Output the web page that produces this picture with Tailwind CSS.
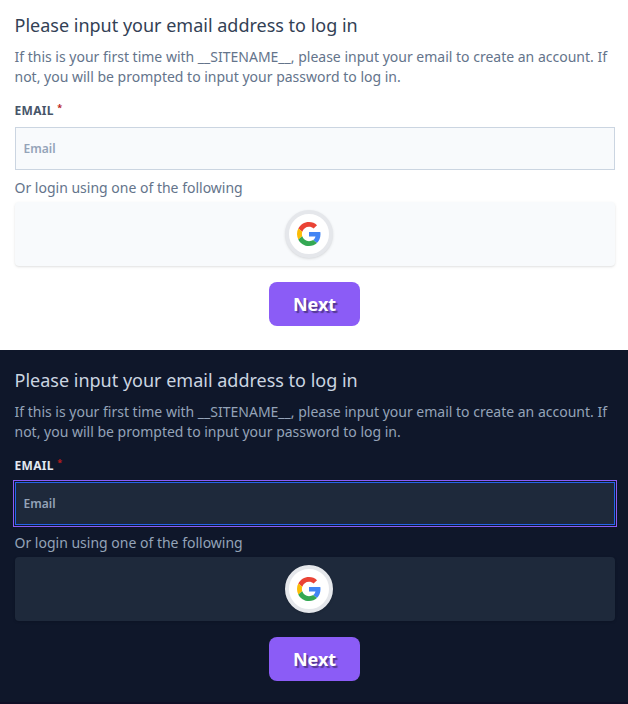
<!DOCTYPE html>
<html lang="en">
<head>
<meta charset="utf-8">
<title>Log in</title>
<script src="https://cdn.jsdelivr.net/npm/@tailwindcss/browser@4"></script>
</head>
<body class="bg-white font-['Noto_Sans',sans-serif] text-sm">
<svg class="hidden">
  <symbol id="google" viewBox="0 0 48 48">
    <path fill="#EA4335" d="M24 9.5c3.54 0 6.71 1.22 9.21 3.6l6.85-6.85C35.9 2.38 30.47 0 24 0 14.62 0 6.51 5.38 2.56 13.22l7.98 6.19C12.43 13.72 17.74 9.5 24 9.5z"/>
    <path fill="#4285F4" d="M46.98 24.55c0-1.57-.15-3.09-.38-4.55H24v9.02h12.94c-.58 2.96-2.26 5.48-4.78 7.18l7.73 6c4.51-4.18 7.09-10.36 7.09-17.65z"/>
    <path fill="#FBBC05" d="M10.53 28.59c-.48-1.45-.76-2.99-.76-4.59s.27-3.14.76-4.59l-7.98-6.19C.92 16.46 0 20.12 0 24c0 3.88.92 7.54 2.56 10.78l7.97-6.19z"/>
    <path fill="#34A853" d="M24 48c6.48 0 11.93-2.13 15.89-5.81l-7.73-6c-2.15 1.45-4.92 2.3-8.16 2.3-6.26 0-11.57-4.22-13.47-9.91l-7.98 6.19C6.51 42.62 14.62 48 24 48z"/>
  </symbol>
</svg>
<section class="h-[350px] pt-[11px] pl-[14.5px] pr-[13.5px] text-[#64748b]">
  <h1 class="text-lg leading-7 text-[#334155]">Please input your email address to log in</h1>
  <p class="mt-2 leading-5">If this is your first time with __SITENAME__, please input your email to create an account. If not, you will be prompted to input your password to log in.</p>
  <label class="mt-4 block h-4 text-xs leading-4 font-bold tracking-wide text-[#475569]">EMAIL <span class="relative -top-1 text-[9px] leading-none text-[#b91c1c]">*</span></label>
  <input class="mt-2 block h-[43px] w-full border border-[#cbd5e1] bg-[#f8fafc] px-2 text-xs font-semibold outline-none placeholder:text-[#94a3b8]" placeholder="Email">
  <p class="mt-2 leading-5">Or login using one of the following</p>
  <div class="mt-1 flex h-16 items-center justify-center rounded bg-[#f8fafc] pr-3 shadow-sm">
    <button class="flex size-12 items-center justify-center rounded-full border-4 border-[#e5e7eb] bg-white shadow-sm"><svg class="size-6"><use href="#google"/></svg></button>
  </div>
  <button class="mx-auto mt-4 block h-11 w-[91px] rounded-lg bg-[#8b5cf6] text-lg font-bold text-white [text-shadow:2px_2px_1px_rgba(0,0,0,0.4)]">Next</button>
</section>
<section class="h-[352px] bg-[#0f172a] pt-4 pl-[14.5px] pr-[13.5px] text-[#94a3b8]">
  <h1 class="text-lg leading-7 text-[#cbd5e1]">Please input your email address to log in</h1>
  <p class="mt-2 leading-5">If this is your first time with __SITENAME__, please input your email to create an account. If not, you will be prompted to input your password to log in.</p>
  <label class="mt-4 block h-4 text-xs leading-4 font-bold tracking-wide text-[#e2e8f0]">EMAIL <span class="relative -top-1 text-[9px] leading-none text-[#b91c1c]">*</span></label>
  <input class="mt-2 block h-[43px] w-full border border-[#2563eb] bg-[#1e293b] px-2 text-xs font-semibold outline outline-offset-1 outline-[#8b5cf6] placeholder:text-[#94a3b8]" placeholder="Email">
  <p class="mt-2 leading-5">Or login using one of the following</p>
  <div class="mt-1 flex h-16 items-center justify-center rounded bg-[#1e293b] pr-3 shadow-sm">
    <button class="flex size-12 items-center justify-center rounded-full border-4 border-[#e5e7eb] bg-white shadow-sm"><svg class="size-6"><use href="#google"/></svg></button>
  </div>
  <button class="mx-auto mt-4 block h-11 w-[91px] rounded-lg bg-[#8b5cf6] text-lg font-bold text-white [text-shadow:2px_2px_1px_rgba(0,0,0,0.4)]">Next</button>
</section>
<div class="h-0.5 bg-[#0f0f26]"></div>
</body>
</html>
